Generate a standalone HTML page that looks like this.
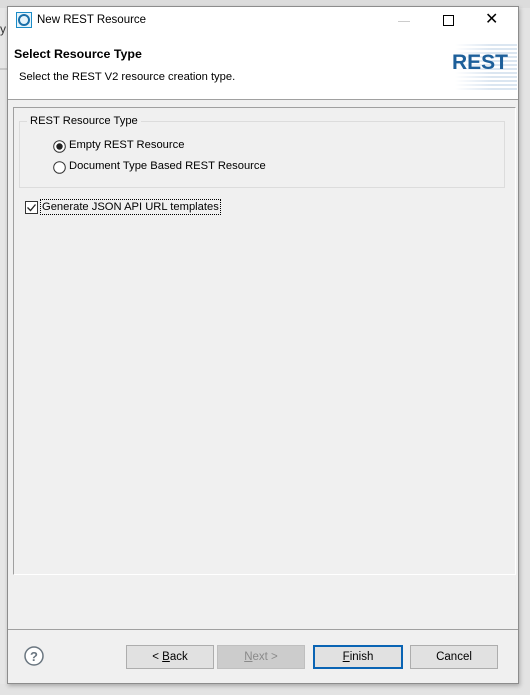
<!DOCTYPE html>
<html><head><style>
body{margin:0;width:530px;height:695px;background:#f0f0f0;position:relative;overflow:hidden;font-family:"Liberation Sans",sans-serif;font-size:11.2px;color:#000}
.a{position:absolute}
.btn{position:absolute;top:645px;height:22px;border:1px solid #adadad;background:#e1e1e1;text-align:center;line-height:22px;font-size:11.5px}
</style></head><body>
<div class="a" style="left:0;top:0;width:530px;height:8px;background:#dcdcdc"></div>
<div class="a" style="left:0;top:8px;width:7px;height:685px;background:#e6e6e6"></div>
<div class="a" style="left:0;top:68px;width:7px;height:2px;background:#c8c8c8"></div>
<div class="a" style="left:0;top:22px;font-size:12px;color:#333">y</div>
<div class="a" style="left:519px;top:8px;width:11px;height:687px;background:#e3e3e3"></div>
<div class="a" style="left:0;top:684px;width:530px;height:11px;background:#e3e3e3"></div>
<div class="a" style="left:7px;top:6px;width:510px;height:676px;border:1px solid #8c8c8c;background:#f0f0f0;box-shadow:1px 2px 4px rgba(0,0,0,.25)"></div>
<div class="a" style="left:8px;top:7px;width:510px;height:92px;background:#fff"></div>
<svg class="a" style="left:16px;top:12px" width="16" height="16"><rect x="0.5" y="0.5" width="15" height="15" fill="#e6f4fb" stroke="#1b8cc8"/><circle cx="8" cy="8" r="5" fill="none" stroke="#1b6fa8" stroke-width="2"/></svg>
<div class="a" style="left:37px;top:14px;font-size:11.5px">New REST Resource</div>
<div class="a" style="left:398px;top:21px;width:12px;height:1px;background:#ccc"></div>
<div class="a" style="left:443px;top:15px;width:9px;height:9px;border:1px solid #000"></div>
<div class="a" style="left:485px;top:9px;font-size:16px">✕</div>
<div class="a" style="left:14px;top:47px;font-size:12.4px;font-weight:bold">Select Resource Type</div>
<div class="a" style="left:19px;top:71px">Select the REST V2 resource creation type.</div>
<div class="a" style="left:455px;top:42px;width:62px;height:50px;background:repeating-linear-gradient(#fff 0 2px,#dbe6f1 2px 4px);-webkit-mask:linear-gradient(90deg,transparent,#000 60%)"></div>
<div class="a" style="left:452px;top:51px;font-size:21px;font-weight:bold;color:#1d5f9a">REST</div>
<div class="a" style="left:8px;top:99px;width:510px;height:1px;background:#a0a0a0"></div>
<div class="a" style="left:13px;top:107px;width:501px;height:466px;border:1px solid #a0a0a0;border-right-color:#fff;border-bottom-color:#fff"></div>
<div class="a" style="left:19px;top:121px;width:484px;height:65px;border:1px solid #dcdcdc"></div>
<div class="a" style="left:27px;top:115px;padding:0 3px;background:#f0f0f0">REST Resource Type</div>
<svg class="a" style="left:53px;top:140px" width="13" height="13"><circle cx="6.5" cy="6.5" r="5.8" fill="#fff" stroke="#333"/><circle cx="6.5" cy="6.5" r="3.2" fill="#222"/></svg>
<div class="a" style="left:69px;top:139px">Empty REST Resource</div>
<svg class="a" style="left:53px;top:161px" width="13" height="13"><circle cx="6.5" cy="6.5" r="5.8" fill="#fff" stroke="#333"/></svg>
<div class="a" style="left:69px;top:160px">Document Type Based REST Resource</div>
<svg class="a" style="left:25px;top:201px" width="13" height="13"><rect x="0.5" y="0.5" width="12" height="12" fill="#fff" stroke="#333"/><path d="M2.5 6.5l3 3 5-6" fill="none" stroke="#222" stroke-width="1.3"/></svg>
<div class="a" style="left:40px;top:199px;border:1px dotted #000;padding:0 1px;line-height:14px">Generate JSON API URL templates</div>
<div class="a" style="left:8px;top:629px;width:510px;height:1px;background:#a0a0a0"></div>
<svg class="a" style="left:24px;top:646px" width="20" height="20"><circle cx="10" cy="10" r="9" fill="#fff" stroke="#6a7680" stroke-width="1.5"/><text x="10" y="15" text-anchor="middle" font-size="13" font-weight="bold" fill="#6a7680" font-family="Liberation Sans">?</text></svg>
<div class="btn" style="left:126px;width:86px">&lt; <u>B</u>ack</div>
<div class="btn" style="left:217px;width:86px;border-color:#bfbfbf;background:#cccccc;color:#8a8a8a"><u>N</u>ext &gt;</div>
<div class="btn" style="left:313px;width:86px;height:20px;line-height:20px;border:2px solid #0a64b4"><u>F</u>inish</div>
<div class="btn" style="left:410px;width:86px">Cancel</div>
</body></html>
